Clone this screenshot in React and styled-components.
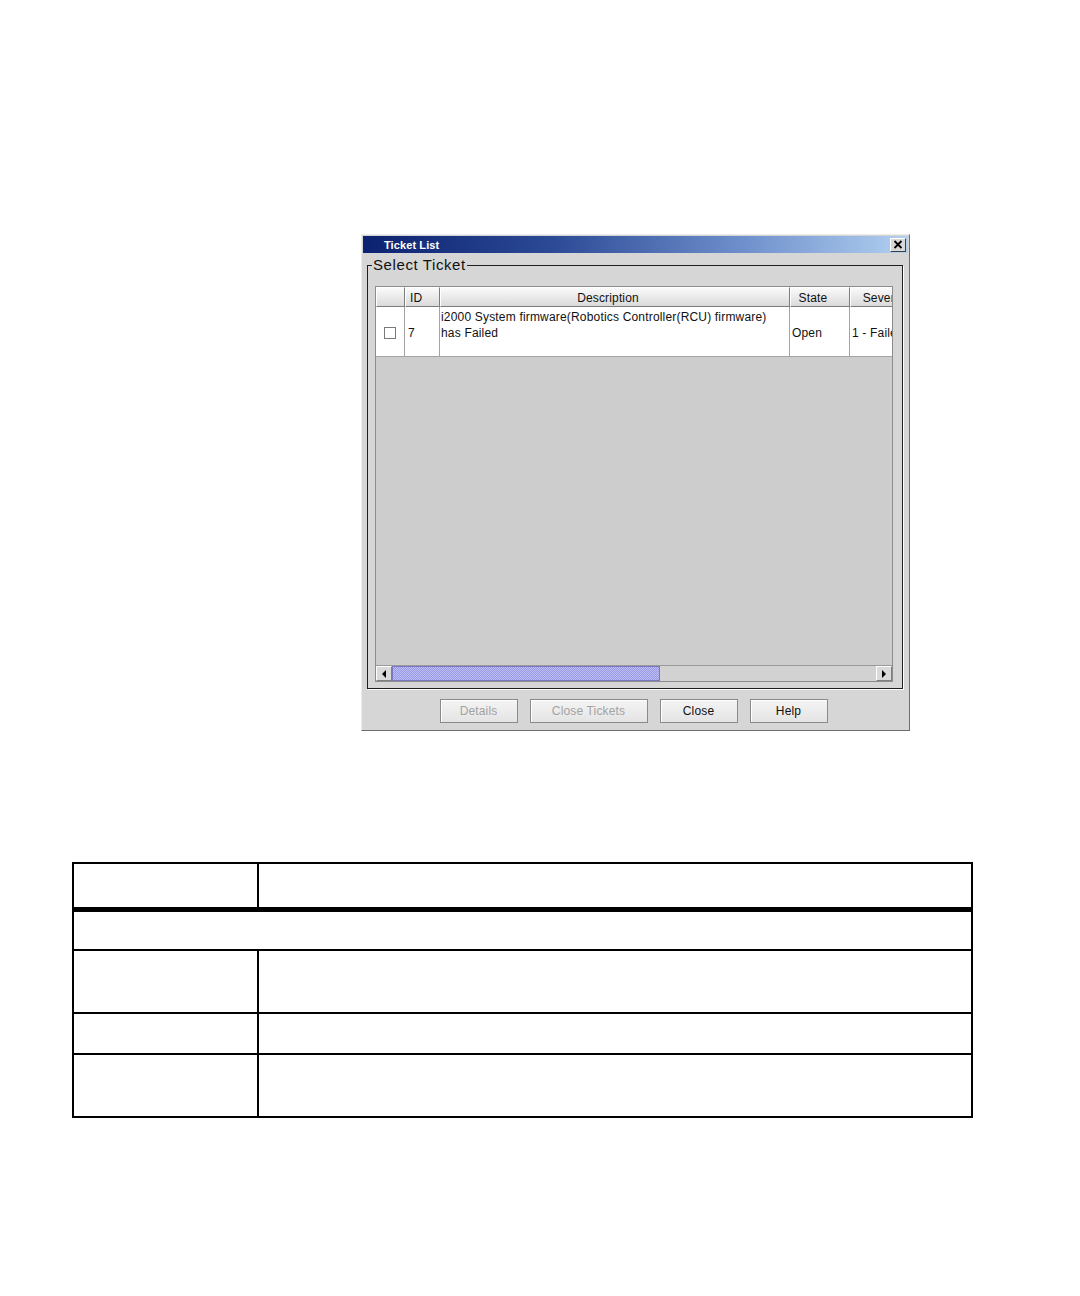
import React from "react";
import styled, { createGlobalStyle } from "styled-components";

const Global = createGlobalStyle`
  html, body { margin: 0; padding: 0; background: #ffffff; }
  body { font-family: "Liberation Sans", Arial, sans-serif; }
  * { box-sizing: border-box; }
`;

const Page = styled.div`
  padding-top: 234px;
  padding-bottom: 177px;
`;

const Dialog = styled.div`
  margin-left: 361px;
  width: 549px;
  background: #d6d6d6;
  border: 1px solid;
  border-color: #ececec #6e6e6e #6e6e6e #ececec;
  padding: 1px;
  display: flex;
  flex-direction: column;
`;

const TitleBar = styled.div`
  height: 17px;
  display: flex;
  align-items: center;
  justify-content: space-between;
  padding: 0 2px 0 21px;
  background: linear-gradient(to right, #0c2270 0%, #2c4a96 35%, #6f90cc 70%, #b2d0f0 100%);
`;

const TitleText = styled.span`
  color: #ffffff;
  font-weight: bold;
  font-size: 11px;
  letter-spacing: 0.1px;
`;

const CloseBox = styled.div`
  width: 16px;
  height: 14px;
  background: #d8d8d8;
  border: 1px solid;
  border-color: #ffffff #404040 #404040 #ffffff;
  display: flex;
  align-items: center;
  justify-content: center;
`;

const Group = styled.fieldset`
  margin: 4px 0 0 4px;
  width: 536px;
  border: 1px solid #1e1e1e;
  box-shadow: 1px 1px 0 #ffffff;
  padding: 0 8px 6px 7px;
  min-width: 0;
`;

const Legend = styled.legend`
  margin-left: -3px;
  padding: 0 1px;
  font-size: 15px;
  line-height: 16px;
  color: #111;
  letter-spacing: 0.6px;
`;

const Pane = styled.div`
  margin-top: 13px;
  width: 518px;
  height: 396px;
  border: 1px solid #8c8c8c;
  display: flex;
  flex-direction: column;
  background: #cdcdcd;
`;

const Viewport = styled.div`
  flex: 1;
  overflow: hidden;
  position: relative;
`;

const Grid = styled.div`
  display: grid;
  grid-template-columns: 29px 35px 350px 60px 84px;
  width: max-content;
`;

const HeadCell = styled.div`
  height: 20px;
  display: flex;
  align-items: center;
  justify-content: ${(p) => (p.$left ? "flex-start" : "center")};
  padding-left: ${(p) => (p.$left ? "4px" : "0")};
  padding-right: ${(p) => (p.$left ? "0" : "14px")};
  padding-top: 1px;
  font-size: 12px;
  letter-spacing: 0.15px;
  color: #111;
  background: linear-gradient(#fafafa, #dadada);
  border-top: 1px solid #ffffff;
  border-left: 1px solid #ffffff;
  border-right: 1px solid #7c7c7c;
  border-bottom: 1px solid #7c7c7c;
  white-space: nowrap;
`;

const Cell = styled.div`
  height: 50px;
  background: #ffffff;
  border-right: 1px solid #a4a4a4;
  border-bottom: 1px solid #a4a4a4;
  font-size: 12px;
  letter-spacing: 0.18px;
  line-height: 16px;
  color: #111;
  display: flex;
  align-items: ${(p) => (p.$top ? "flex-start" : "center")};
  justify-content: ${(p) => (p.$center ? "center" : "flex-start")};
  padding-left: ${(p) => p.$pad ?? 2}px;
  padding-top: 2px;
  white-space: nowrap;
  overflow: hidden;
`;

const Check = styled.div`
  width: 12px;
  height: 12px;
  border: 1px solid #7a7a7a;
  background: #ffffff;
  margin-right: 1px;
`;

const ScrollBar = styled.div`
  height: 16px;
  display: flex;
  background: #d2d2d2;
  border-top: 1px solid #9a9a9a;
`;

const Arrow = styled.div`
  width: 16px;
  height: 15px;
  background: #dadada;
  border: 1px solid;
  border-color: #ffffff #808080 #808080 #ffffff;
  display: flex;
  align-items: center;
  justify-content: center;
  flex: none;
`;

const Thumb = styled.div`
  width: 268px;
  height: 15px;
  border: 1px solid #7878c0;
  background-color: #a8a8ec;
  background-image: conic-gradient(#9a9ae2 25%, #bcbcf6 0 50%, #9a9ae2 0 75%, #bcbcf6 0);
  background-size: 2px 2px;
  flex: none;
`;

const Track = styled.div`
  flex: 1;
`;

const ButtonRow = styled.div`
  display: flex;
  justify-content: center;
  gap: 12px;
  padding: 10px 4px 6px 0;
`;

const Button = styled.div`
  width: ${(p) => p.$w}px;
  height: 24px;
  display: flex;
  align-items: center;
  justify-content: center;
  font-size: 12px;
  letter-spacing: 0.15px;
  color: ${(p) => (p.$disabled ? "#a2a2a2" : "#111")};
  background: linear-gradient(#f4f4f4, #e4e4e4);
  border: 1px solid #8a8a8a;
  box-shadow: inset 1px 1px 0 #ffffff;
`;

const InfoTable = styled.div`
  margin: 131px 0 0 72px;
  width: 901px;
  display: grid;
  grid-template-columns: 185px 1fr;
  grid-template-rows: 48px 39px 63px 41px 63px;
  border-left: 2px solid #000;
  border-top: 2px solid #000;
`;

const TCell = styled.div`
  border-right: 2px solid #000;
  border-bottom: ${(p) => (p.$thick ? "5px" : "2px")} solid #000;
  grid-column: ${(p) => (p.$span ? "1 / span 2" : "auto")};
`;

const ArrowIcon = ({ dir }) => (
  <svg width="6" height="8" viewBox="0 0 6 8">
    {dir === "left" ? (
      <polygon points="5,0 5,8 1,4" fill="#000" />
    ) : (
      <polygon points="1,0 1,8 5,4" fill="#000" />
    )}
  </svg>
);

export default function App() {
  return (
    <Page>
      <Global />
      <Dialog>
        <TitleBar>
          <TitleText>Ticket List</TitleText>
          <CloseBox>
            <svg width="10" height="9" viewBox="0 0 10 9">
              <path d="M1.5 1 L8.5 8 M8.5 1 L1.5 8" stroke="#000" strokeWidth="1.8" />
            </svg>
          </CloseBox>
        </TitleBar>
        <Group>
          <Legend>Select Ticket</Legend>
          <Pane>
            <Viewport>
              <Grid>
                <HeadCell />
                <HeadCell $left>ID</HeadCell>
                <HeadCell>Description</HeadCell>
                <HeadCell>State</HeadCell>
                <HeadCell>Severity</HeadCell>
                <Cell $center $pad={0}>
                  <Check />
                </Cell>
                <Cell $pad={3}>7</Cell>
                <Cell $top $pad={1}>
                  i2000 System firmware(Robotics Controller(RCU) firmware)
                  <br />
                  has Failed
                </Cell>
                <Cell $pad={2}>Open</Cell>
                <Cell $pad={2}>1 - Failed</Cell>
              </Grid>
            </Viewport>
            <ScrollBar>
              <Arrow>
                <ArrowIcon dir="left" />
              </Arrow>
              <Thumb />
              <Track />
              <Arrow>
                <ArrowIcon dir="right" />
              </Arrow>
            </ScrollBar>
          </Pane>
        </Group>
        <ButtonRow>
          <Button $w={78} $disabled>Details</Button>
          <Button $w={118} $disabled>Close Tickets</Button>
          <Button $w={78}>Close</Button>
          <Button $w={78}>Help</Button>
        </ButtonRow>
      </Dialog>
      <InfoTable>
        <TCell $thick />
        <TCell $thick />
        <TCell $span />
        <TCell />
        <TCell />
        <TCell />
        <TCell />
        <TCell />
        <TCell />
      </InfoTable>
    </Page>
  );
}
